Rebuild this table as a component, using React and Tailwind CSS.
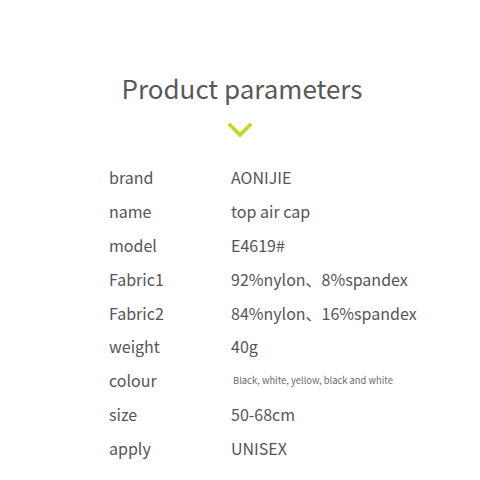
import React from 'react';

const params = [
  { label: 'brand', value: 'AONIJIE' },
  { label: 'name', value: 'top air cap' },
  { label: 'model', value: 'E4619#' },
  { label: 'Fabric1', value: '92%nylon、8%spandex' },
  { label: 'Fabric2', value: '84%nylon、16%spandex' },
  { label: 'weight', value: '40g' },
  { label: 'colour', value: 'Black, white, yellow, black and white', small: true },
  { label: 'size', value: '50-68cm' },
  { label: 'apply', value: 'UNISEX' },
];

const App = () => {
  return (
    <div
      className="w-[480px] h-[480px] bg-white text-[#555555] overflow-hidden"
      style={{ fontFamily: '"Noto Sans CJK SC", "Noto Sans", sans-serif' }}
    >
      {/* Title */}
      <div className="pt-[68px] flex flex-col items-center">
        <h1 className="text-[26px] leading-[40px] text-[#585858] ml-[4px]">Product parameters</h1>
        <svg className="mt-[14px]" width="26" height="16" viewBox="0 0 26 16" fill="none">
          <path d="M3 3 L13 13 L23 3" stroke="#c6d41e" strokeWidth="3.5" strokeLinecap="square" />
        </svg>
      </div>

      {/* Parameter rows */}
      <div className="mt-[22px] pl-[109px] flex flex-col">
        {params.map((p) => (
          <div key={p.label} className="flex items-center h-[33.9px]">
            <div className="w-[122px] text-[16px]">{p.label}</div>
            <div className={p.small ? 'text-[9.4px] text-[#6a6a6a] pl-[2px]' : 'text-[16px]'}>{p.value}</div>
          </div>
        ))}
      </div>
    </div>
  );
};

export default App;
